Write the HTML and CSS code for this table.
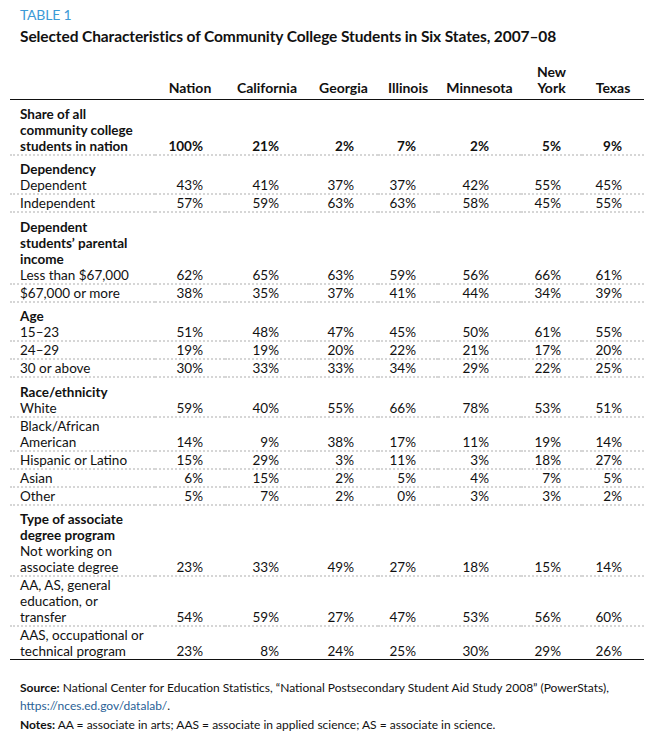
FILE: index.html
```html
<!DOCTYPE html>
<html>
<head>
<meta charset="utf-8">
<link rel="stylesheet" href="styles.css">
</head>
<body>
<div class="page">
  <div class="kicker">TABLE 1</div>
  <h1 class="title">Selected Characteristics of Community College Students in Six States, 2007–08</h1>
  <table class="tbl">
    <colgroup>
      <col class="c-label"><col class="c1"><col class="c2"><col class="c3"><col class="c4"><col class="c5"><col class="c6"><col class="c7">
    </colgroup>
    <thead>
      <tr>
        <th></th><th>Nation</th><th>California</th><th>Georgia</th><th>Illinois</th><th>Minnesota</th><th>New<br>York</th><th>Texas</th>
      </tr>
    </thead>
    <tbody>
      <tr class="data sec first">
        <td class="lbl b">Share of all<br>community college<br>students in nation</td>
        <td class="n1 b">100%</td><td class="n2 b">21%</td><td class="n3 b">2%</td><td class="n4 b">7%</td><td class="n5 b">2%</td><td class="n6 b">5%</td><td class="n7 b">9%</td>
      </tr>
      <tr class="head sec"><td class="lbl b" colspan="8">Dependency</td></tr>
      <tr class="data">
        <td class="lbl">Dependent</td>
        <td class="n1">43%</td><td class="n2">41%</td><td class="n3">37%</td><td class="n4">37%</td><td class="n5">42%</td><td class="n6">55%</td><td class="n7">45%</td>
      </tr>
      <tr class="data">
        <td class="lbl">Independent</td>
        <td class="n1">57%</td><td class="n2">59%</td><td class="n3">63%</td><td class="n4">63%</td><td class="n5">58%</td><td class="n6">45%</td><td class="n7">55%</td>
      </tr>
      <tr class="head sec"><td class="lbl b" colspan="8">Dependent<br>students’ parental<br>income</td></tr>
      <tr class="data">
        <td class="lbl">Less than $67,000</td>
        <td class="n1">62%</td><td class="n2">65%</td><td class="n3">63%</td><td class="n4">59%</td><td class="n5">56%</td><td class="n6">66%</td><td class="n7">61%</td>
      </tr>
      <tr class="data">
        <td class="lbl">$67,000 or more</td>
        <td class="n1">38%</td><td class="n2">35%</td><td class="n3">37%</td><td class="n4">41%</td><td class="n5">44%</td><td class="n6">34%</td><td class="n7">39%</td>
      </tr>
      <tr class="head sec"><td class="lbl b" colspan="8">Age</td></tr>
      <tr class="data">
        <td class="lbl">15–23</td>
        <td class="n1">51%</td><td class="n2">48%</td><td class="n3">47%</td><td class="n4">45%</td><td class="n5">50%</td><td class="n6">61%</td><td class="n7">55%</td>
      </tr>
      <tr class="data">
        <td class="lbl">24–29</td>
        <td class="n1">19%</td><td class="n2">19%</td><td class="n3">20%</td><td class="n4">22%</td><td class="n5">21%</td><td class="n6">17%</td><td class="n7">20%</td>
      </tr>
      <tr class="data">
        <td class="lbl">30 or above</td>
        <td class="n1">30%</td><td class="n2">33%</td><td class="n3">33%</td><td class="n4">34%</td><td class="n5">29%</td><td class="n6">22%</td><td class="n7">25%</td>
      </tr>
      <tr class="head sec"><td class="lbl b" colspan="8">Race/ethnicity</td></tr>
      <tr class="data">
        <td class="lbl">White</td>
        <td class="n1">59%</td><td class="n2">40%</td><td class="n3">55%</td><td class="n4">66%</td><td class="n5">78%</td><td class="n6">53%</td><td class="n7">51%</td>
      </tr>
      <tr class="data">
        <td class="lbl">Black/African<br>American</td>
        <td class="n1">14%</td><td class="n2">9%</td><td class="n3">38%</td><td class="n4">17%</td><td class="n5">11%</td><td class="n6">19%</td><td class="n7">14%</td>
      </tr>
      <tr class="data">
        <td class="lbl">Hispanic or Latino</td>
        <td class="n1">15%</td><td class="n2">29%</td><td class="n3">3%</td><td class="n4">11%</td><td class="n5">3%</td><td class="n6">18%</td><td class="n7">27%</td>
      </tr>
      <tr class="data">
        <td class="lbl">Asian</td>
        <td class="n1">6%</td><td class="n2">15%</td><td class="n3">2%</td><td class="n4">5%</td><td class="n5">4%</td><td class="n6">7%</td><td class="n7">5%</td>
      </tr>
      <tr class="data">
        <td class="lbl">Other</td>
        <td class="n1">5%</td><td class="n2">7%</td><td class="n3">2%</td><td class="n4">0%</td><td class="n5">3%</td><td class="n6">3%</td><td class="n7">2%</td>
      </tr>
      <tr class="head sec"><td class="lbl b" colspan="8">Type of associate<br>degree program</td></tr>
      <tr class="data">
        <td class="lbl">Not working on<br>associate degree</td>
        <td class="n1">23%</td><td class="n2">33%</td><td class="n3">49%</td><td class="n4">27%</td><td class="n5">18%</td><td class="n6">15%</td><td class="n7">14%</td>
      </tr>
      <tr class="data">
        <td class="lbl">AA, AS, general<br>education, or<br>transfer</td>
        <td class="n1">54%</td><td class="n2">59%</td><td class="n3">27%</td><td class="n4">47%</td><td class="n5">53%</td><td class="n6">56%</td><td class="n7">60%</td>
      </tr>
      <tr class="data last">
        <td class="lbl">AAS, occupational or<br>technical program</td>
        <td class="n1">23%</td><td class="n2">8%</td><td class="n3">24%</td><td class="n4">25%</td><td class="n5">30%</td><td class="n6">29%</td><td class="n7">26%</td>
      </tr>
    </tbody>
  </table>
  <div class="notes">
    <p><span class="tag">Source:</span> National Center for Education Statistics, “National Postsecondary Student Aid Study 2008” (PowerStats),<br><span class="link">https://nces.ed.gov/datalab/</span>.</p>
    <p class="second"><span class="tag">Notes:</span> AA = associate in arts; AAS = associate in applied science; AS = associate in science.</p>
  </div>
</div>
</body>
</html>
```

FILE: styles.css
```css
html, body {
  margin: 0;
  padding: 0;
  background: #ffffff;
}
body {
  font-family: Lato, "Open Sans", sans-serif;
  color: #111111;
}
.page {
  padding: 7px 0 0 0;
}
.kicker {
  margin-left: 20px;
  font-size: 14px;
  line-height: 16px;
  color: #3d9ad6;
  letter-spacing: -0.2px;
}
.title {
  margin: 3px 0 0 20px;
  font-size: 15.5px;
  line-height: 20px;
  font-weight: 700;
  letter-spacing: -0.1px;
}
.tbl {
  margin: 18px 0 0 10px;
  border-collapse: collapse;
  table-layout: fixed;
  width: 634px;
  font-size: 13.5px;
  line-height: 16px;
}
.c-label { width: 145px; }
.c1 { width: 70px; }
.c2 { width: 84px; }
.c3 { width: 69px; }
.c4 { width: 60px; }
.c5 { width: 83px; }
.c6 { width: 61px; }
.c7 { width: 62px; }
.tbl th {
  font-size: 14px;
  font-weight: 700;
  text-align: center;
  vertical-align: bottom;
  padding: 0 0 3px 0;
  border-bottom: 1.5px solid #111111;
}
.tbl td {
  padding: 0;
  vertical-align: bottom;
  white-space: nowrap;
}
.tbl td.lbl {
  padding-left: 10px;
  text-align: left;
}
.b { font-weight: 700; }
.tbl tr.sec td { padding-top: 5.5px; }
.tbl tr.data td { border-bottom: 2px dotted #d6d6d6; }
.tbl tr.data.last td { border-bottom: 1.5px solid #111111; }
.tbl td.n1, .tbl td.n2, .tbl td.n3, .tbl td.n4, .tbl td.n5, .tbl td.n6, .tbl td.n7 { text-align: right; }
.n1 { padding-right: 22px !important; }
.n2 { padding-right: 30px !important; }
.n3 { padding-right: 24px !important; }
.n4 { padding-right: 22px !important; }
.n5 { padding-right: 32px !important; }
.n6 { padding-right: 21px !important; }
.n7 { padding-right: 22px !important; }
.notes {
  margin: 19px 0 0 20px;
  font-size: 12px;
  line-height: 17.5px;
}
.notes p { margin: 0; }
.notes p.second { margin-top: 2px; }
.tag { font-weight: 700; }
.link { color: #2a5f96; }
```
